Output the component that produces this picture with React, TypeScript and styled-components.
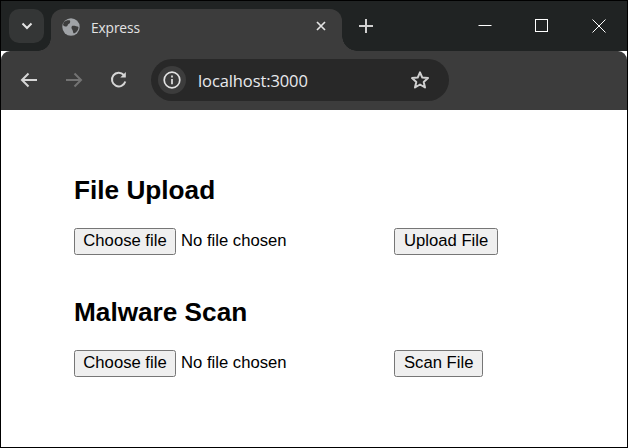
import React from 'react';
import styled, {createGlobalStyle} from 'styled-components';

const GlobalStyle = createGlobalStyle`
  html, body {
    margin: 0;
    padding: 0;
    background: #fff;
  }
  * {
    box-sizing: border-box;
  }
`;

const Icon = styled.svg`
  display: block;
  flex: none;
`;

const App = () => {
    return (
        <Frame>
            <GlobalStyle/>
            <TitleBar>
                <TabSearch>
                    <Icon width="12" height="8" viewBox="0 0 12 8" fill="none" stroke="#e3e3e3" strokeWidth="2">
                        <path d="M1.5 1.5 6 6l4.500-4.500"/>
                    </Icon>
                </TabSearch>
                <Tab>
                    <Icon width="20" height="20" viewBox="0 0 20 20">
                        <circle cx="10" cy="10" r="8.700" fill="#a0a3a7"/>
                        <path d="M3 5C5 3.500 7 3 9 3.500 9.500 5 9 6.500 7.500 7 6.500 7.500 7 9 5.500 9.500 4 9.800 2.500 9 2 8 2.200 7 2.500 6 3 5ZM11 9C13 8.500 16 9.500 17.500 10 17.500 13 15.500 15.500 13 16.500 12 16 12 14 11.500 13 10.500 12 10 10 11 9Z" fill="#3c3c3c"/>
                    </Icon>
                    <TabTitle>Express</TabTitle>
                    <TabClose>
                        <Icon width="10" height="10" viewBox="0 0 10 10" stroke="#e3e3e3" strokeWidth="1.700">
                            <path d="M1 1l8 8M9 1 1 9"/>
                        </Icon>
                    </TabClose>
                </Tab>
                <NewTab>
                    <Icon width="14" height="14" viewBox="0 0 14 14" stroke="#d0d0d0" strokeWidth="2">
                        <path d="M7 0v14M0 7h14"/>
                    </Icon>
                </NewTab>
                <WindowControls>
                    <WindowButton>
                        <Icon width="14" height="14" viewBox="0 0 14 14" stroke="#fff" strokeWidth="1">
                            <path d="M.5 6.500h13"/>
                        </Icon>
                    </WindowButton>
                    <WindowButton>
                        <Icon width="14" height="14" viewBox="0 0 14 14" fill="none" stroke="#fff" strokeWidth="1">
                            <rect x=".5" y=".5" width="12" height="12"/>
                        </Icon>
                    </WindowButton>
                    <WindowButton>
                        <Icon width="14" height="14" viewBox="0 0 14 14" stroke="#fff" strokeWidth="1">
                            <path d="M.5.500l13 13M13.500.500l-13 13"/>
                        </Icon>
                    </WindowButton>
                </WindowControls>
            </TitleBar>
            <Toolbar>
                <NavButton>
                    <Icon width="18" height="16" viewBox="0 0 18 16" fill="none" stroke="#d6d6d6" strokeWidth="2">
                        <path d="M17 8H2M8.500 1.500 2 8l6.500 6.500"/>
                    </Icon>
                </NavButton>
                <NavButton>
                    <Icon width="18" height="16" viewBox="0 0 18 16" fill="none" stroke="#737373" strokeWidth="2">
                        <path d="M1 8h15M9.500 1.500 16 8l-6.500 6.500"/>
                    </Icon>
                </NavButton>
                <NavButton>
                    <Icon width="18" height="18" viewBox="0 0 18 18" fill="none" stroke="#d6d6d6" strokeWidth="2">
                        <path d="M15.300 10.500A6.800 6.800 0 1 1 13.800 4"/>
                        <path d="M15.800 1v5.500h-5.500" fill="#d6d6d6" stroke="none"/>
                    </Icon>
                </NavButton>
                <Omnibox>
                    <SiteInfo>
                        <Icon width="18" height="18" viewBox="0 0 18 18" fill="none" stroke="#e3e3e3" strokeWidth="1.700">
                            <circle cx="9" cy="9" r="7.800"/>
                            <path d="M9 8v5.200M9 4.600v1.800"/>
                        </Icon>
                    </SiteInfo>
                    <Address>localhost:3000</Address>
                    <Star>
                        <Icon width="20" height="20" viewBox="0 0 20 20" fill="none" stroke="#d0d0d0" strokeWidth="2" strokeLinejoin="round">
                            <path d="m10 2.300 2.300 5.300 5.700.5-4.300 3.800 1.300 5.600-5-3-5 3 1.300-5.600L2 8.100l5.700-.5Z"/>
                        </Icon>
                    </Star>
                </Omnibox>
            </Toolbar>
            <Page>
                <Section>
                    <Heading>File Upload</Heading>
                    <UploadRow>
                        <FilePicker>
                            <ChooseButton type="button">Choose file</ChooseButton>
                            <FileStatus>No file chosen</FileStatus>
                        </FilePicker>
                        <FormButton type="button">Upload File</FormButton>
                    </UploadRow>
                </Section>
                <Section>
                    <Heading>Malware Scan</Heading>
                    <UploadRow>
                        <FilePicker>
                            <ChooseButton type="button">Choose file</ChooseButton>
                            <FileStatus>No file chosen</FileStatus>
                        </FilePicker>
                        <FormButton type="button">Scan File</FormButton>
                    </UploadRow>
                </Section>
            </Page>
        </Frame>
    )
}

export default App;

const Frame = styled.div`
  display: flex;
  flex-direction: column;
  width: 628px;
  height: 448px;
  overflow: hidden;
  border: 1px solid #000;
  background-color: #fff;
`;

const TitleBar = styled.div`
  display: flex;
  flex: none;
  align-items: flex-start;
  height: 50px;
  padding: 8px 0 0 8px;
  background-color: #202323;
`;

const TabSearch = styled.div`
  position: relative;
  z-index: 1;
  display: flex;
  align-items: center;
  justify-content: center;
  width: 35px;
  height: 34px;
  border-radius: 10px;
  background-color: #343636;
`;

const Tab = styled.div`
  position: relative;
  display: flex;
  align-items: center;
  width: 291px;
  height: 42px;
  margin-left: 7px;
  padding: 0 16px 6px 10px;
  border-radius: 12px 12px 0 0;
  background-color: #3c3c3c;

  &::before,
  &::after {
    content: "";
    position: absolute;
    bottom: 0;
  }

  &::before {
    left: -13px;
    width: 13px;
    height: 13px;
    background: radial-gradient(circle at 0 0, #202323 12.500px, #3c3c3c 13px);
  }

  &::after {
    right: -15px;
    width: 15px;
    height: 15px;
    background: radial-gradient(circle at 100% 0, #202323 14.500px, #3c3c3c 15px);
  }
`;

const TabTitle = styled.span`
  margin-left: 10px;
  color: #e3e3e3;
  font-family: "Open Sans", sans-serif;
  font-size: 13.800px;
  letter-spacing: -0.15px;
`;

const TabClose = styled.div`
  margin: 0 0 2px auto;
`;

const NewTab = styled.div`
  margin: 10px 0 0 17px;
`;

const WindowControls = styled.div`
  display: flex;
  margin-left: auto;
  padding: 10px 21px 0 0;
  gap: 43px;
`;

const WindowButton = styled.div`
  width: 14px;
  height: 14px;
`;

const Toolbar = styled.div`
  display: flex;
  flex: none;
  align-items: center;
  height: 59px;
  padding: 0 0 1px 19px;
  border-radius: 9px 9px 0 0;
  background-color: #3c3c3c;
`;

const NavButton = styled.div`
  display: flex;
  align-items: center;
  justify-content: center;
  width: 18px;
  margin-right: 27px;
`;

const Omnibox = styled.div`
  display: flex;
  align-items: center;
  width: 298px;
  height: 42px;
  margin-left: -4px;
  padding: 0 19px 0 7px;
  border-radius: 21px;
  background-color: #282828;
`;

const SiteInfo = styled.div`
  display: flex;
  align-items: center;
  justify-content: center;
  width: 28px;
  height: 28px;
  border-radius: 50%;
  background-color: #3c3c3c;
`;

const Address = styled.span`
  margin-left: 12px;
  color: #e8eaed;
  font-family: "Open Sans", sans-serif;
  font-size: 16.500px;
  letter-spacing: -0.1px;
`;

const Star = styled.div`
  margin-left: auto;
`;

const Page = styled.div`
  display: flex;
  flex-direction: column;
  flex: 1;
  padding: 65px 0 0 73px;
  gap: 42px;
  color: #000;
  font-family: "Liberation Sans", Arial, sans-serif;
`;

const Section = styled.section`
  display: flex;
  flex-direction: column;
  gap: 23px;
`;

const Heading = styled.h2`
  margin: 0;
  font-size: 26.200px;
  line-height: 30px;
  font-weight: 700;
`;

const UploadRow = styled.div`
  display: flex;
  align-items: center;
`;

const FilePicker = styled.div`
  display: flex;
  align-items: center;
  width: 320px;
`;

const FormButton = styled.button`
  height: 27px;
  padding: 0 9px 2px;
  border: 1px solid #767676;
  border-radius: 2.500px;
  background-color: #efefef;
  color: #000;
  font-family: inherit;
  font-size: 16.670px;
`;

const ChooseButton = styled(FormButton)`
  width: 102px;
  padding: 0 0 2px;
`;

const FileStatus = styled.span`
  margin: 0 0 2px 5px;
  font-size: 16.670px;
`;
